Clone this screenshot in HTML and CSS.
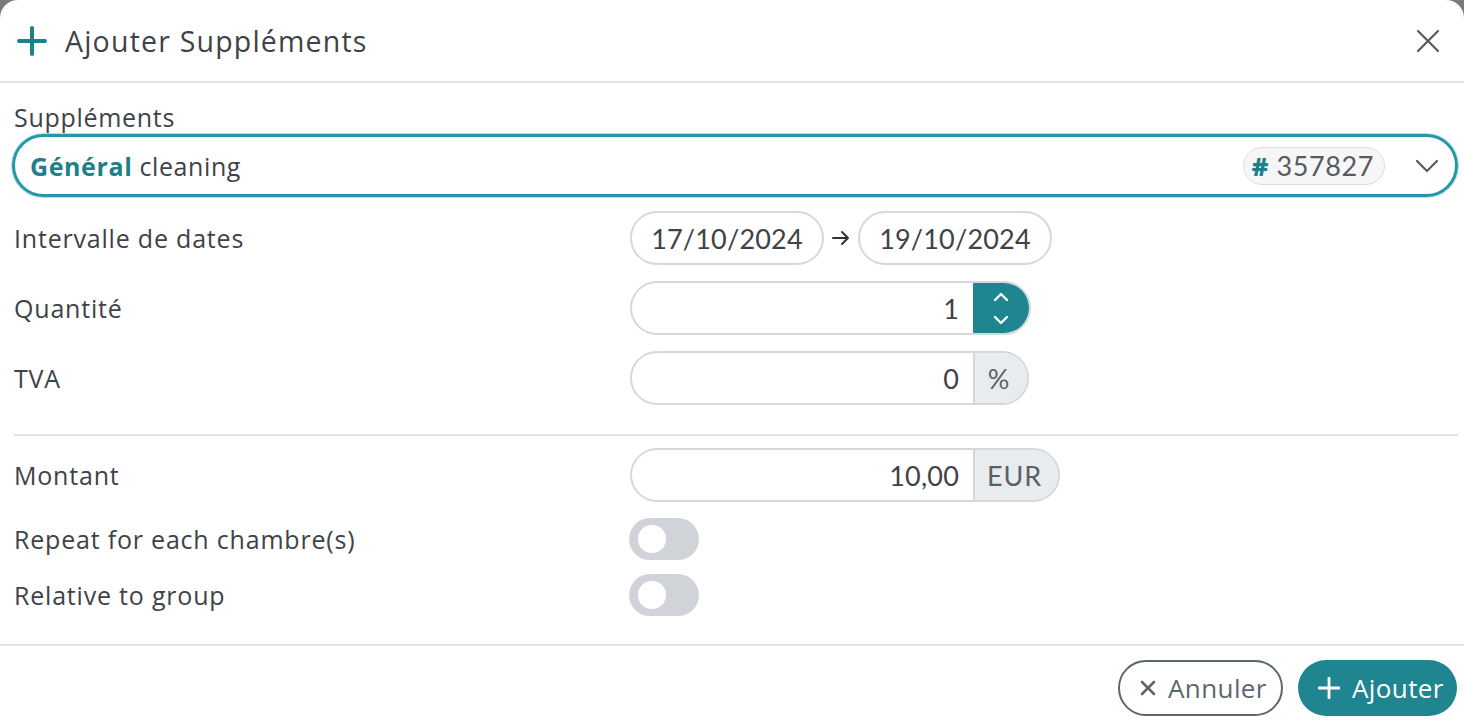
FILE: index.html
```html
<!DOCTYPE html>
<html lang="fr">
<head>
<meta charset="utf-8">
<title>Ajouter Suppléments</title>
<link rel="stylesheet" href="styles.css">
</head>
<body>
<div class="modal">
  <header class="modal-header">
    <div class="title">
      <svg class="title-icon" viewBox="0 0 32 32" width="32" height="32"><path d="M16 3v26M3 16h26" stroke="#1f7f8a" stroke-width="4" stroke-linecap="round" fill="none"/></svg>
      <span>Ajouter Suppléments</span>
    </div>
    <svg class="close" viewBox="0 0 24 24" width="24" height="24"><path d="M2 2l20 20M22 2L2 22" stroke="#555b61" stroke-width="2.2" stroke-linecap="round" fill="none"/></svg>
  </header>
  <main class="modal-body">
    <div class="field-label">Suppléments</div>
    <div class="select">
      <div class="select-text"><b class="accent">Général</b> cleaning</div>
      <div class="tag"><span class="hash">#</span> 357827</div>
      <svg class="chevron" viewBox="0 0 24 14" width="24" height="14"><path d="M2 2l10 10L22 2" stroke="#555b61" stroke-width="2.2" stroke-linecap="round" stroke-linejoin="round" fill="none"/></svg>
    </div>
    <div class="rows">
      <div class="row">
        <div class="label">Intervalle de dates</div>
        <div class="dates">
          <div class="pill date">17/10/2024</div>
          <svg class="arrow" viewBox="0 0 18 16" width="18" height="16"><path d="M1 8h15M10 2l6 6-6 6" stroke="#333" stroke-width="2" stroke-linecap="round" stroke-linejoin="round" fill="none"/></svg>
          <div class="pill date">19/10/2024</div>
        </div>
      </div>
      <div class="row">
        <div class="label">Quantité</div>
        <div class="group">
          <div class="num">1</div>
          <div class="spin">
            <svg viewBox="0 0 18 40" width="18" height="40"><path d="M3 12l6-6 6 6M3 29l6 6 6-6" stroke="#fff" stroke-width="2.4" stroke-linecap="round" stroke-linejoin="round" fill="none"/></svg>
          </div>
        </div>
      </div>
      <div class="row">
        <div class="label">TVA</div>
        <div class="group">
          <div class="num">0</div>
          <div class="addon pct">%</div>
        </div>
      </div>
    </div>
    <hr class="sep">
    <div class="rows rows2">
      <div class="row">
        <div class="label">Montant</div>
        <div class="group">
          <div class="num">10,00</div>
          <div class="addon eur">EUR</div>
        </div>
      </div>
      <div class="row row-toggle">
        <div class="label">Repeat for each chambre(s)</div>
        <div class="toggle"><span class="knob"></span></div>
      </div>
      <div class="row row-toggle">
        <div class="label">Relative to group</div>
        <div class="toggle"><span class="knob"></span></div>
      </div>
    </div>
  </main>
  <footer class="modal-footer">
    <button class="btn btn-outline">
      <svg viewBox="0 0 16 16" width="16" height="16"><path d="M2 2l12 12M14 2L2 14" stroke="#5a6770" stroke-width="2.6" stroke-linecap="round" fill="none"/></svg>
      <span>Annuler</span>
    </button>
    <button class="btn btn-primary">
      <svg viewBox="0 0 22 22" width="22" height="22"><path d="M11 1v20M1 11h20" stroke="#fff" stroke-width="2.8" stroke-linecap="round" fill="none"/></svg>
      <span>Ajouter</span>
    </button>
  </footer>
</div>
</body>
</html>
```

FILE: styles.css
```css
* { box-sizing: border-box; }
html, body { margin: 0; padding: 0; }
body {
  background: #7a7a7a;
  font-family: "Open Sans", "Noto Sans", sans-serif;
  color: #3d4348;
  width: 1464px;
  height: 720px;
  overflow: hidden;
}
.modal {
  background: #fff;
  height: 720px;
  border-radius: 18px 18px 0 0;
  display: flex;
  flex-direction: column;
}
.modal-header {
  height: 83px;
  border-bottom: 2px solid #e2e3e8;
  display: flex;
  align-items: center;
  justify-content: space-between;
  padding: 0 24px 0 16px;
}
.title {
  display: flex;
  align-items: center;
  gap: 17px;
  font-size: 28.5px;
  letter-spacing: 1.2px;
  color: #3d4348;
}
.title-icon { display: block; }
.close { display: block; }
.modal-body {
  padding: 18px 6px 0 12px;
}
.field-label {
  font-size: 25px;
  letter-spacing: 0.7px;
  line-height: 32px;
  padding-left: 2px;
  margin-bottom: 1px;
}
.select {
  height: 63px;
  border: 3px solid #2597aa;
  box-shadow: 0 0 0 1px rgba(80,190,205,0.45);
  border-radius: 32px;
  display: flex;
  align-items: center;
  padding: 0 16px 0 15px;
  font-size: 25px;
  letter-spacing: 0.6px;
}
.select-text { flex: 1; }
.accent { color: #1f7f8a; font-weight: 700; }
.tag {
  height: 38px;
  border: 1px solid #dcdde0;
  background: #f6f6f7;
  border-radius: 19px;
  padding: 0 10px 0 8px;
  display: flex;
  align-items: center;
  color: #555b61;
  font-family: "Lato", sans-serif;
  font-size: 27px;
  letter-spacing: 0.6px;
  margin-right: 30px;
  white-space: pre;
}
.hash { color: #1f7f8a; font-weight: 800; font-family: "Open Sans", sans-serif; font-size: 25px; }
.chevron { display: block; }
.rows {
  display: flex;
  flex-direction: column;
  gap: 16px;
  margin-top: 14px;
  padding-left: 2px;
}
.row {
  display: grid;
  grid-template-columns: 616px auto;
  align-items: center;
  font-size: 25px;
  letter-spacing: 0.8px;
}
.label { line-height: 32px; }
.dates { display: flex; align-items: center; gap: 8px; }
.pill {
  height: 54px;
  border: 2px solid #d5d8dc;
  border-radius: 27px;
  display: flex;
  align-items: center;
  justify-content: center;
  font-family: "Lato", sans-serif;
  font-size: 27px;
  letter-spacing: 0.2px;
  color: #3d4348;
}
.date { width: 194px; }
.arrow { display: block; }
.group {
  display: flex;
  height: 54px;
  width: max-content;
  border: 2px solid #d5d8dc;
  border-radius: 27px;
  overflow: hidden;
}
.num {
  width: 341px;
  display: flex;
  align-items: center;
  justify-content: flex-end;
  padding-right: 14px;
  font-family: "Lato", sans-serif;
  font-size: 27px;
  letter-spacing: 0.2px;
  color: #3d4348;
}
.spin {
  width: 58px;
  margin: -2px -2px -2px 0;
  background: #1f8591;
  border-radius: 0 27px 27px 0;
  display: flex;
  align-items: center;
  justify-content: center;
  padding-right: 3px;
}
.spin svg { display: block; }
.addon {
  border-left: 2px solid #d5d8dc;
  background: #e9ecef;
  display: flex;
  align-items: center;
  justify-content: center;
  font-family: "Lato", sans-serif;
  font-size: 27px;
  color: #5a6066;
}
.pct { width: 54px; padding-right: 4px; }
.eur { width: 85px; padding-right: 4px; }
.sep {
  border: 0;
  border-top: 2px solid #e2e3e8;
  margin: 29px 0 12px 2px;
}
.rows2 { margin-top: 0; }
.toggle {
  width: 70px;
  height: 42px;
  border-radius: 21px;
  background: #d0d4d9;
  margin-left: -1px;
  padding: 7px 0 0 9px;
}
.knob {
  display: block;
  width: 28px;
  height: 28px;
  border-radius: 50%;
  background: #fff;
}
.rows2 .row:nth-child(3) { margin-top: -2px; }
.modal-footer {
  margin-top: 28px;
  border-top: 2px solid #e2e3e8;
  display: flex;
  justify-content: flex-end;
  gap: 15px;
  padding: 14px 7px 0 0;
}
.btn {
  height: 56px;
  border-radius: 28px;
  display: flex;
  align-items: center;
  gap: 12px;
  font-family: "Open Sans", "Noto Sans", sans-serif;
  font-size: 26px;
  letter-spacing: 0.4px;
  padding: 0 14px 0 20px;
  cursor: pointer;
  white-space: nowrap;
}
.btn svg { display: block; flex: none; }
.btn-outline {
  background: #fff;
  border: 2px solid #5a6770;
  color: #5a6770;
  width: 165px;
}
.btn-primary {
  background: #1f8591;
  border: 0;
  color: #fff;
  width: 159px;
}
```
